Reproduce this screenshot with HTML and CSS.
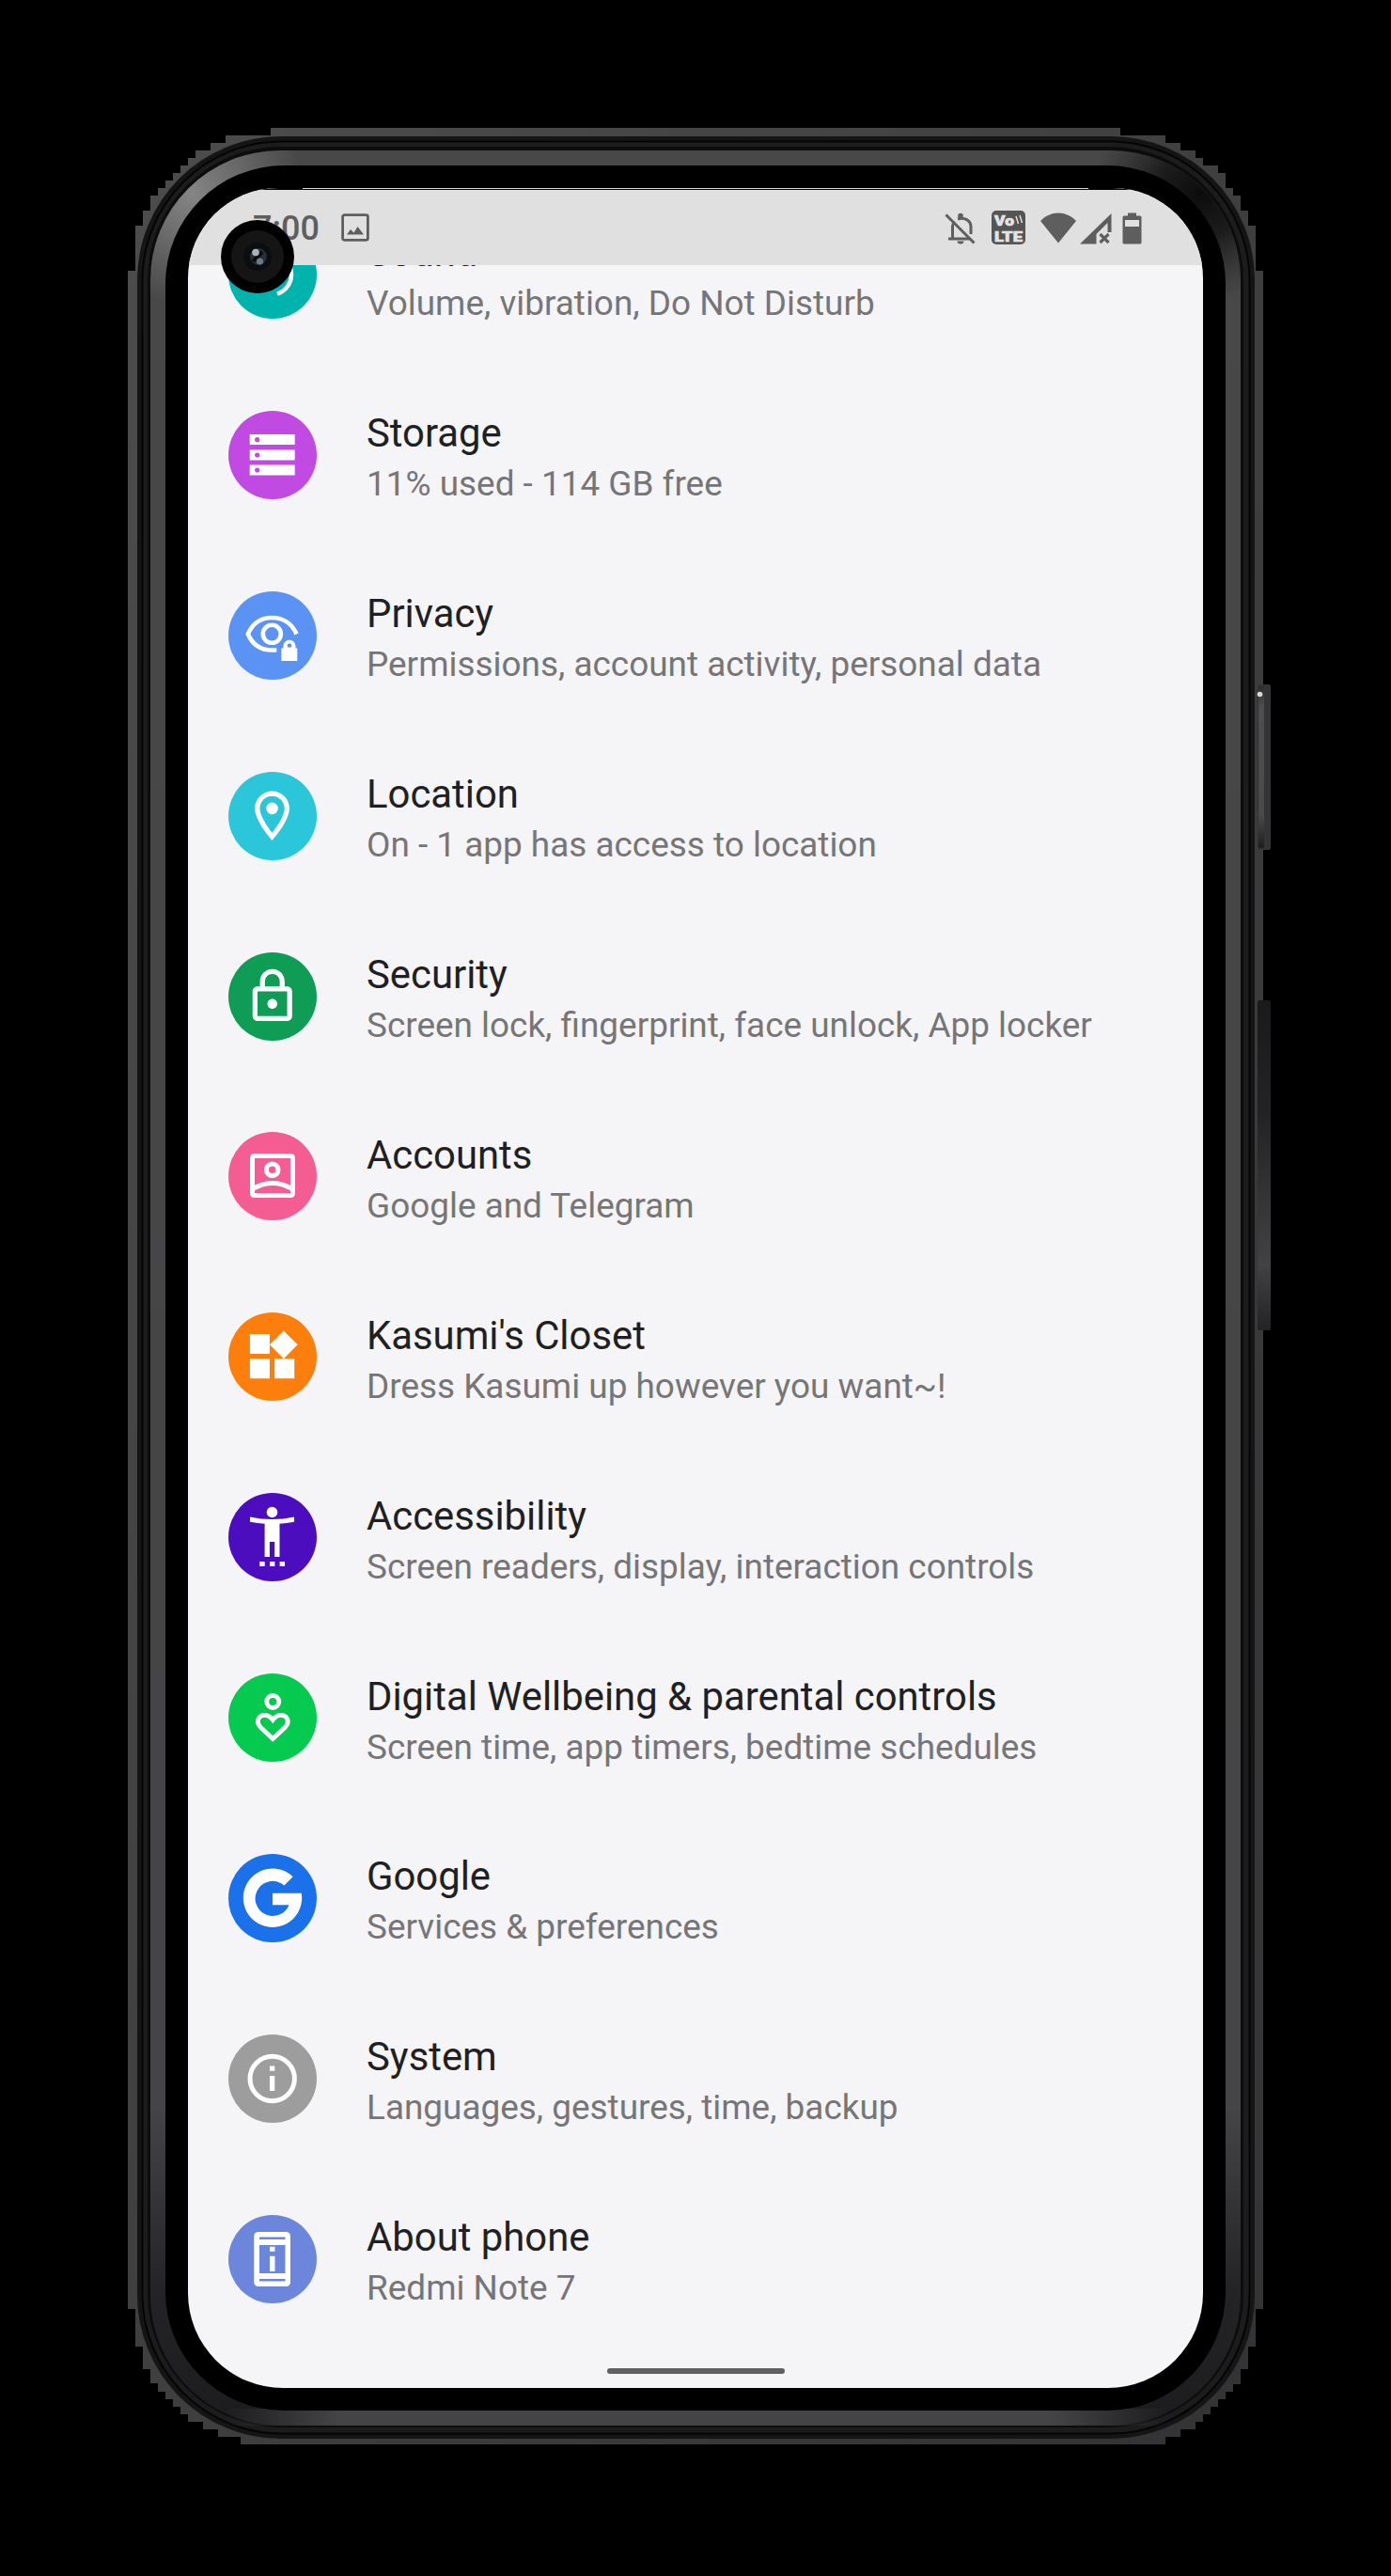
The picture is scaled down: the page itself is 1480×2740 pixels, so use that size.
FILE: index.html
```html
<!DOCTYPE html>
<html lang="en">
<head>
<meta charset="utf-8">
<title>Settings</title>
<link rel="stylesheet" href="styles.css">
</head>
<body>
<main class="phone">
  <svg class="frame" viewBox="0 0 1480 2740" aria-hidden="true">
    <defs>
      <linearGradient id="edge" x1="0" y1="0" x2="1" y2="1">
        <stop offset="0" stop-color="#4c4c4c"/><stop offset="1" stop-color="#333234"/>
      </linearGradient>
      <linearGradient id="band" gradientUnits="userSpaceOnUse" x1="0" y1="160" x2="0" y2="2580">
        <stop offset="0" stop-color="#484848"/><stop offset=".86" stop-color="#454446"/>
        <stop offset=".94" stop-color="#242325"/><stop offset="1" stop-color="#1c1b1d"/>
      </linearGradient>
      <linearGradient id="foot" x1="0" y1="0" x2="1" y2="0">
        <stop offset="0" stop-color="#444345" stop-opacity="0"/><stop offset=".12" stop-color="#444345"/>
        <stop offset=".88" stop-color="#444345"/><stop offset="1" stop-color="#444345" stop-opacity="0"/>
      </linearGradient>
      <radialGradient id="shine" gradientUnits="userSpaceOnUse" cx="204" cy="206" r="120">
        <stop offset="0" stop-color="#858585"/><stop offset="1" stop-color="#858585" stop-opacity="0"/>
      </radialGradient>
      <radialGradient id="shade" gradientUnits="userSpaceOnUse" cx="1278" cy="206" r="115">
        <stop offset="0" stop-color="#0c0c0c"/><stop offset=".4" stop-color="#111" stop-opacity=".8"/><stop offset="1" stop-color="#222" stop-opacity="0"/>
      </radialGradient>
      <linearGradient id="power" x1="0" y1="0" x2="0" y2="1">
        <stop offset="0" stop-color="#2c2b2d"/><stop offset=".12" stop-color="#4e4d4f"/><stop offset=".8" stop-color="#4a494b"/><stop offset="1" stop-color="#1d1c1e"/>
      </linearGradient>
      <linearGradient id="volume" x1="0" y1="0" x2="0" y2="1">
        <stop offset="0" stop-color="#1a191b"/><stop offset=".35" stop-color="#232224"/><stop offset=".8" stop-color="#424143"/><stop offset="1" stop-color="#232224"/>
      </linearGradient>
    </defs>
    <path fill="url(#edge)" d="M136 288h8v-48h8v-16h8v-16h8v-8h8v-8h8v-8h8v-8h8v-8h8v-8h16v-8h16v-8h48v-8h904v8h48v8h16v8h16v8h8v8h16v8h8v16h8v8h8v16h8v16h8v48h8V2456h-8v40h-8v24h-8v16h-8v8h-8v8h-8v8h-8v8h-8v8h-8v8h-16v8h-16v8H256v-8h-24v-8h-16v-8h-16v-8h-8v-8h-8v-8h-8v-8h-8v-9h-8v-15h-8v-24h-8v-40h-8z"/>
    <rect x="146" y="145" width="1189" height="2449" rx="153" fill="#151515"/>
    <rect x="151.500" y="150.500" width="1178" height="2438" rx="148" fill="#1c1c1c" stroke="#050505" stroke-width="2"/>
    <rect x="157" y="156" width="1166" height="2426" rx="142" fill="#0c0c0c"/>
    <rect x="160" y="160" width="1160" height="2420" rx="138" fill="url(#band)"/>
    <rect x="240" y="2562" width="1000" height="18" fill="url(#foot)"/>
    <path fill="url(#shine)" d="M160 340V298A138 138 0 0 1 298 160h42v180z"/>
    <path fill="url(#shade)" d="M1140 160h42a138 138 0 0 1 138 138v42h-180z"/>
    <rect x="176" y="176" width="1128" height="2388" rx="126" fill="#000"/>
    <rect x="1338" y="728" width="14" height="176" rx="2" fill="#343335"/>
    <rect x="1339" y="730" width="6" height="172" fill="url(#power)"/>
    <circle cx="1340.500" cy="738.500" r="2.800" fill="#d8d8d8"/>
    <rect x="1338" y="1064" width="14" height="351" rx="2" fill="url(#volume)"/>
  </svg>

  <section class="screen">
    <header class="status">
      <span class="clock">7:00</span>
      <svg class="shot" viewBox="0 0 30 30"><rect x="1.600" y="1.600" width="26.800" height="26.800" rx="2" fill="none" stroke="#5e5e5e" stroke-width="2.800"/><path fill="#5e5e5e" d="M6 22.500l4-5.500 3.500 3.500 4-6.500 6.500 8.500z"/></svg>
      <svg class="tray" viewBox="0 0 210 40">
        <g fill="none" stroke="#5e5e5e" stroke-width="3">
          <path d="M8.500 30V17c0-2 .7-4 2-5.500M14 9c7-2.500 14 1.500 14 8v8M4 30h22"/><path d="M1.500 4.500l30 30"/>
        </g>
        <circle cx="17" cy="5.500" r="2.800" fill="#5e5e5e"/><path fill="#5e5e5e" d="M13.500 32.500h7a3.500 3 0 0 1-7 0z"/>
        <rect x="50" y="0" width="36" height="36" rx="5" fill="#555"/>
        <g fill="#e4e4e4" stroke="#e4e4e4" stroke-width=".6" font-family="Roboto, sans-serif" font-weight="900">
          <text x="53" y="16" font-size="14" textLength="21" lengthAdjust="spacingAndGlyphs">Vo</text>
          <text x="53" y="32.500" font-size="14" textLength="30" lengthAdjust="spacingAndGlyphs">LTE</text>
        </g>
        <path d="M76 6l2.500 8M80 5l2.500 8" stroke="#e4e4e4" stroke-width="1.400" fill="none"/>
        <path fill="#5e5e5e" d="M102 11c11-11.500 27-11.500 38 0L121 34.500z"/>
        <path fill="#5e5e5e" d="M144 35.500L177.500 3v20h-4V13L161.500 25v10.500z"/>
        <path d="M165.500 25l9 9M174.500 25l-9 9" stroke="#5e5e5e" stroke-width="3.200"/>
        <path fill="#5e5e5e" fill-rule="evenodd" d="M195 2.500h9v3h4q1.500 0 1.500 1.500v27q0 1.500-1.500 1.500h-17q-1.500 0-1.500-1.500V7q0-1.500 1.500-1.500h4zM192 10v7h15v-7z"/>
      </svg>
    </header>

    <ul class="list">
      <li class="row">
        <svg class="icon" viewBox="0 0 94 94"><circle cx="47" cy="47" r="47" fill="#00b3ad"/><path d="M52 67.500A21.500 21.500 0 0 0 52 26.500" fill="none" stroke="#fff" stroke-width="4.500"/></svg>
        <div class="text"><h2>Sound</h2><p>Volume, vibration, Do Not Disturb</p></div>
      </li>
      <li class="row">
        <svg class="icon" viewBox="0 0 94 94"><circle cx="47" cy="47" r="47" fill="#c14ae2"/><path fill="#fff" d="M22.700 25h48v11h-48zM22.700 41.500h48v11h-48zM22.700 57.500h48v11h-48z"/><g fill="#c14ae2"><circle cx="30.700" cy="30.700" r="2.600"/><circle cx="30.700" cy="47" r="2.600"/><circle cx="30.700" cy="63" r="2.600"/></g></svg>
        <div class="text"><h2>Storage</h2><p>11% used - 114 GB free</p></div>
      </li>
      <li class="row">
        <svg class="icon" viewBox="0 0 94 94"><circle cx="47" cy="47" r="47" fill="#5b93f5"/><g fill="none" stroke="#fff" stroke-width="4.600"><path d="M72.500 45.500C68 35 59 28 46.300 28 34 28 25.500 34.500 20.800 45.500 25.500 56 34 62.500 46.300 62.500h5"/><circle cx="46.300" cy="45.300" r="9.500"/></g><path fill="#fff" fill-rule="evenodd" d="M56.300 60.500h2.200v-2c0-9 13-9 13 0v2h1.800V74h-17zM62.800 57.500v2h4.400v-2c0-2.600-4.400-2.600-4.400 0z"/></svg>
        <div class="text"><h2>Privacy</h2><p>Permissions, account activity, personal data</p></div>
      </li>
      <li class="row">
        <svg class="icon" viewBox="0 0 94 94"><circle cx="47" cy="47" r="47" fill="#2bc6da"/><path transform="translate(15 15.200) scale(2.630)" fill="#fff" d="M12 2C8.130 2 5 5.130 5 9c0 5.250 7 13 7 13s7-7.750 7-13c0-3.870-3.130-7-7-7zM7 9c0-2.760 2.240-5 5-5s5 2.240 5 5c0 2.880-2.880 7.190-5 9.880C9.920 16.210 7 11.850 7 9zM12 6.600a2.400 2.400 0 1 0 0 4.800 2.400 2.400 0 0 0 0-4.800z"/></svg>
        <div class="text"><h2>Location</h2><p>On - 1 app has access to location</p></div>
      </li>
      <li class="row">
        <svg class="icon" viewBox="0 0 94 94"><circle cx="47" cy="47" r="47" fill="#0f9d56"/><path transform="translate(15.200 15.200) scale(2.630)" fill="#fff" d="M18 8h-1V6c0-2.760-2.240-5-5-5S7 3.240 7 6v2H6c-1.100 0-2 .9-2 2v10c0 1.100.9 2 2 2h12c1.100 0 2-.9 2-2V10c0-1.100-.9-2-2-2zM9 6c0-1.660 1.340-3 3-3s3 1.340 3 3v2H9V6zm9 14H6V10h12v10zm-6-3c1.100 0 2-.9 2-2s-.9-2-2-2-2 .9-2 2 .9 2 2 2z"/></svg>
        <div class="text"><h2>Security</h2><p>Screen lock, fingerprint, face unlock, App locker</p></div>
      </li>
      <li class="row">
        <svg class="icon" viewBox="0 0 94 94"><circle cx="47" cy="47" r="47" fill="#f45d92"/><g fill="none" stroke="#fff" stroke-width="5"><rect x="25.500" y="25.500" width="43" height="42" rx="2"/><circle cx="46.700" cy="40.300" r="6.300"/><path d="M27 60q19.700-11 40 0"/></g></svg>
        <div class="text"><h2>Accounts</h2><p>Google and Telegram</p></div>
      </li>
      <li class="row">
        <svg class="icon" viewBox="0 0 94 94"><circle cx="47" cy="47" r="47" fill="#fc7f0e"/><path transform="translate(15 15) scale(2.630)" fill="#fff" d="M13 13v8h8v-8h-8zM3 21h8v-8H3v8zM3 3v8h8V3H3zm13.660-1.310L11 7.340 16.660 13l5.660-5.660-5.660-5.650z"/></svg>
        <div class="text"><h2>Kasumi's Closet</h2><p>Dress Kasumi up however you want~!</p></div>
      </li>
      <li class="row">
        <svg class="icon" viewBox="0 0 94 94"><circle cx="47" cy="47" r="47" fill="#4b0dbd"/><g fill="#fff"><circle cx="46.500" cy="20.500" r="5.800"/><path d="M23 25.500q23.500 5 47 0v5.300q-8 1.600-15.500 2V68h-5.300V52h-5.300v16h-5.300V32.800q-7.500-.4-15.600-2zM33.300 73h5.400v5h-5.400zM44 73h5.400v5H44zM54.600 73H60v5h-5.400z"/></g></svg>
        <div class="text"><h2>Accessibility</h2><p>Screen readers, display, interaction controls</p></div>
      </li>
      <li class="row">
        <svg class="icon" viewBox="0 0 94 94"><circle cx="47" cy="47" r="47" fill="#06ca50"/><g fill="none" stroke="#fff" stroke-width="4.800"><circle cx="47.300" cy="30" r="6.500"/><path d="M47.300 69.500L34.500 57.500C28.500 51.500 32 44.300 38.800 44.300c3.700 0 6.200 2 8.500 5 2.300-3 4.800-5 8.500-5 6.800 0 10.300 7.200 4.300 13.200z"/></g></svg>
        <div class="text"><h2>Digital Wellbeing &amp; parental controls</h2><p>Screen time, app timers, bedtime schedules</p></div>
      </li>
      <li class="row">
        <svg class="icon" viewBox="0 0 94 94"><circle cx="47" cy="47" r="47" fill="#1a71e9"/><path fill="#fff" d="M68.600 24.200A31.200 31.200 0 1 0 77.800 41.800H47v12.400h17.500A18.600 18.600 0 1 1 59.400 33.400z"/></svg>
        <div class="text"><h2>Google</h2><p>Services &amp; preferences</p></div>
      </li>
      <li class="row">
        <svg class="icon" viewBox="0 0 94 94"><circle cx="47" cy="47" r="47" fill="#9d9d9d"/><circle cx="46.700" cy="47" r="23.700" fill="none" stroke="#fff" stroke-width="5"/><path fill="#fff" d="M44 33.500h5.300v5.200H44zM44 44h5.300v16H44z"/></svg>
        <div class="text"><h2>System</h2><p>Languages, gestures, time, backup</p></div>
      </li>
      <li class="row">
        <svg class="icon" viewBox="0 0 94 94"><circle cx="47" cy="47" r="47" fill="#6c86dc"/><rect x="27.300" y="18" width="38.700" height="58" rx="4.500" fill="#fff"/><path fill="#6c86dc" d="M33 23.400h27.500v2.600H33zM33 32h27.500v30H33zM33 68h27.500v2.600H33z"/><path fill="#fff" d="M44 33.700h5.500v5H44zM44 43.700h5.500V60H44z"/></svg>
        <div class="text"><h2>About phone</h2><p>Redmi Note 7</p></div>
      </li>
    </ul>
    <div class="handle"></div>
    <svg class="camera" viewBox="0 0 78 78"><circle cx="39" cy="39" r="39" fill="#000"/><circle cx="39" cy="39" r="28" fill="#151516"/><circle cx="39" cy="39" r="15" fill="#0b0d0f"/><circle cx="40" cy="39" r="9" fill="#263036"/><path d="M34 44l10-10" stroke="#0c0f11" stroke-width="4"/><circle cx="37" cy="34.500" r="3.800" fill="#a9b3b8"/><circle cx="41.500" cy="44" r="3.600" fill="#6c7b83"/></svg>
  </section>
</main>
</body>
</html>
```
FILE: styles.css
```css
* { box-sizing: border-box; }
body {
  margin: 0;
  background: #000;
  font-family: Roboto, "Liberation Sans", sans-serif;
}
.phone {
  position: relative;
  width: 1480px;
  height: 2740px;
  padding: 200px;
  overflow: hidden;
}
.frame {
  position: absolute;
  inset: 0;
  width: 100%;
  height: 100%;
}
.screen {
  position: relative;
  display: flex;
  flex-direction: column;
  height: 2340px;
  width: 1080px;
  overflow: hidden;
  border-radius: 96px 96px 101px 101px;
  background: #f5f4f6;
}
.status {
  position: relative;
  z-index: 1;
  flex: none;
  display: flex;
  align-items: flex-start;
  height: 82px;
  padding: 0 0 0 69px;
  background: #e0e0e0;
}
/* thin highlight along the top of the glass */
.status::before {
  content: "";
  position: absolute;
  inset: 0 0 auto;
  height: 2px;
  background: linear-gradient(#d8d8d4, #d8d8d4) 122px 0 / 836px 1px no-repeat #000;
}
.clock {
  width: 94px;
  padding-top: 21px;
  font-size: 36px;
  font-weight: 500;
  line-height: 44px;
  color: #5e5e5e;
}
.shot {
  width: 30px;
  height: 30px;
  margin-top: 27px;
}
.tray {
  width: 210px;
  height: 40px;
  margin: 24px 0 0 612px;
}
.list {
  flex: 1;
  margin: -86px 0 0;
  padding: 0;
  list-style: none;
}
.row {
  display: flex;
  align-items: center;
  gap: 53px;
  height: 191.900px;
  padding-left: 43px;
}
.icon {
  flex: none;
  width: 94px;
  height: 94px;
}
.text { padding-top: 8px; }
h2, p {
  margin: 0;
  font-weight: 400;
  white-space: nowrap;
}
h2 {
  font-size: 41.840px;
  line-height: 54px;
  color: #202022;
}
p {
  font-size: 36.920px;
  line-height: 53px;
  color: #767577;
}
.handle {
  position: absolute;
  left: 446px;
  bottom: 15px;
  width: 189px;
  height: 6px;
  border-radius: 3px;
  background: #606060;
}
.camera {
  position: absolute;
  z-index: 2;
  left: 35px;
  top: 34px;
  width: 78px;
  height: 78px;
}
```
